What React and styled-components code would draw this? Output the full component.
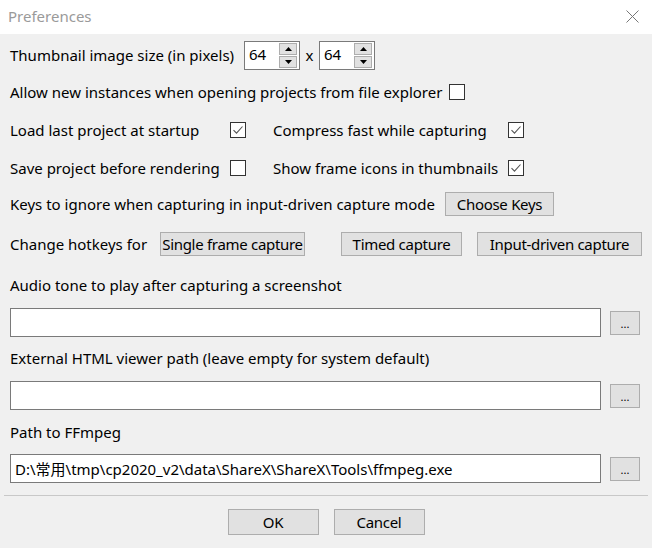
import styled, { createGlobalStyle } from "styled-components";

const Global = createGlobalStyle`
  html, body {
    margin: 0;
    padding: 0;
    background: #f0f0f0;
  }
  body {
    font-family: "Noto Sans", "Noto Sans CJK SC", sans-serif;
    font-size: 15px;
    color: #000;
  }
`;

const Window = styled.div`
  width: 652px;
  height: 548px;
  background: #f0f0f0;
  display: flex;
  flex-direction: column;
  overflow: hidden;
`;

const TitleBar = styled.div`
  height: 34px;
  background: #fff;
  display: flex;
  align-items: center;
  justify-content: space-between;
  padding: 0 13px 2px 8px;
  box-sizing: border-box;
  flex-shrink: 0;
`;

const Title = styled.span`
  color: #9a9a9a;
  font-size: 15px;
`;

const Body = styled.div`
  display: flex;
  flex-direction: column;
  padding: 0 12px 0 10px;
`;

const Row = styled.div`
  display: flex;
  align-items: center;
  height: ${(p) => p.$h || 20}px;
  margin-top: ${(p) => p.$mt || 0}px;
`;

const Label = styled.span`
  white-space: nowrap;
  width: ${(p) => (p.$w ? p.$w + "px" : "auto")};
  margin-left: ${(p) => p.$ml || 0}px;
  margin-bottom: 1px;
  flex-shrink: 0;
`;

const Spin = styled.div`
  display: flex;
  align-items: stretch;
  width: 56px;
  height: 29px;
  box-sizing: border-box;
  border: 1px solid #7a7a7a;
  background: #fff;
`;

const SpinValue = styled.span`
  flex: 1;
  padding-left: 4px;
  line-height: 25px;
`;

const SpinButtons = styled.div`
  display: flex;
  flex-direction: column;
  justify-content: space-between;
  width: 18px;
  padding: 1px 2px 1px 0;
`;

const SpinBtn = styled.div`
  height: 12px;
  box-sizing: border-box;
  border: 1px solid #adadad;
  background: #e1e1e1;
  display: flex;
  align-items: center;
  justify-content: center;
`;

const Times = styled.span`
  width: 19px;
  text-align: center;
  margin-bottom: 1px;
`;

const Box = styled.div`
  width: 16px;
  height: 16px;
  box-sizing: border-box;
  border: 1px solid #333;
  background: #fff;
  flex-shrink: 0;
  display: flex;
  align-items: center;
  justify-content: center;
`;

const Button = styled.div`
  height: ${(p) => p.$h || 24}px;
  width: ${(p) => p.$w}px;
  box-sizing: border-box;
  border: 1px solid #adadad;
  background: #e1e1e1;
  display: flex;
  align-items: center;
  justify-content: center;
  white-space: nowrap;
  letter-spacing: -0.3px;
  flex-shrink: 0;
  margin-left: ${(p) => p.$ml || 0}px;
`;

const Dots = styled(Button)`
  font-size: 11px;
  letter-spacing: 0;
  padding-top: 2px;
`;

const PathRow = styled.div`
  display: flex;
  align-items: center;
  margin-top: ${(p) => p.$mt || 0}px;
  gap: 9px;
`;

const TextBox = styled.div`
  flex: 1;
  height: 29px;
  box-sizing: border-box;
  border: 1px solid #7a7a7a;
  background: #fff;
  padding-left: 4px;
  display: flex;
  align-items: center;
  white-space: nowrap;
`;

const Separator = styled.div`
  height: 1px;
  background: #c8c8c8;
  margin: 12px -8px 0 -6px;
`;

const Footer = styled.div`
  display: flex;
  justify-content: center;
  gap: 15px;
  margin-top: 13px;
  padding-left: 2px;
`;

const Check = () => (
  <svg width="12" height="12" viewBox="0 0 12 12">
    <path d="M1.5 6.2 L4.5 9.2 L10.5 2.5" fill="none" stroke="#555" strokeWidth="1.1" />
  </svg>
);

const Arrow = ({ up }) => (
  <svg width="7" height="4" viewBox="0 0 7 4">
    <path d={up ? "M0 4 L3.5 0 L7 4 Z" : "M0 0 L3.5 4 L7 0 Z"} fill="#000" />
  </svg>
);

const Close = () => (
  <svg width="13" height="13" viewBox="0 0 13 13">
    <path d="M0.5 0.5 L12.5 12.5 M12.5 0.5 L0.5 12.5" stroke="#777" strokeWidth="1" />
  </svg>
);

function Spinner({ value }) {
  return (
    <Spin>
      <SpinValue>{value}</SpinValue>
      <SpinButtons>
        <SpinBtn>
          <Arrow up />
        </SpinBtn>
        <SpinBtn>
          <Arrow />
        </SpinBtn>
      </SpinButtons>
    </Spin>
  );
}

function PathField({ value, mt }) {
  return (
    <PathRow $mt={mt}>
      <TextBox>{value}</TextBox>
      <Dots $w={30} $h={24}>
        ...
      </Dots>
    </PathRow>
  );
}

export default function App() {
  return (
    <Window>
      <Global />
      <TitleBar>
        <Title>Preferences</Title>
        <Close />
      </TitleBar>
      <Body>
        <Row $h={29} $mt={7}>
          <Label $w={234}>Thumbnail image size (in pixels)</Label>
          <Spinner value="64" />
          <Times>x</Times>
          <Spinner value="64" />
        </Row>
        <Row $mt={12}>
          <Label $w={439}>Allow new instances when opening projects from file explorer</Label>
          <Box />
        </Row>
        <Row $mt={18}>
          <Label $w={220}>Load last project at startup</Label>
          <Box>
            <Check />
          </Box>
          <Label $w={235} $ml={27}>Compress fast while capturing</Label>
          <Box>
            <Check />
          </Box>
        </Row>
        <Row $mt={18}>
          <Label $w={220}>Save project before rendering</Label>
          <Box />
          <Label $w={235} $ml={27}>Show frame icons in thumbnails</Label>
          <Box>
            <Check />
          </Box>
        </Row>
        <Row $h={24} $mt={14}>
          <Label $w={435}>Keys to ignore when capturing in input-driven capture mode</Label>
          <Button $w={109}>Choose Keys</Button>
        </Row>
        <Row $h={24} $mt={16}>
          <Label $w={150}>Change hotkeys for</Label>
          <Button $w={145}>Single frame capture</Button>
          <Button $w={121} $ml={36}>Timed capture</Button>
          <Button $w={165} $ml={15}>Input-driven capture</Button>
        </Row>
        <Row $mt={19}>
          <Label>Audio tone to play after capturing a screenshot</Label>
        </Row>
        <PathField mt={13} />
        <Row $mt={11}>
          <Label>External HTML viewer path (leave empty for system default)</Label>
        </Row>
        <PathField mt={13} />
        <Row $mt={12}>
          <Label>Path to FFmpeg</Label>
        </Row>
        <PathField mt={12} value="D:\常用\tmp\cp2020_v2\data\ShareX\ShareX\Tools\ffmpeg.exe" />
        <Separator />
        <Footer>
          <Button $w={91} $h={26}>OK</Button>
          <Button $w={91} $h={26}>Cancel</Button>
        </Footer>
      </Body>
    </Window>
  );
}
